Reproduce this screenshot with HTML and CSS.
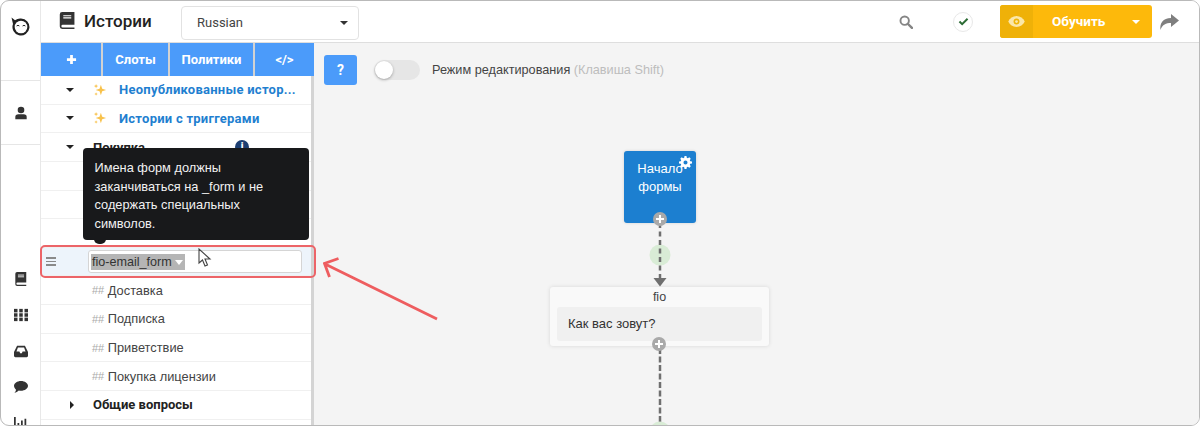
FILE: index.html
```html
<!DOCTYPE html>
<html lang="ru">
<head>
<meta charset="utf-8">
<title>Истории</title>
<link rel="stylesheet" href="styles.css">
</head>
<body>
<div class="frame">
  <nav class="rail">
    <div class="rail-top">
      <svg class="owl" viewBox="0 0 20 20"><path d="M.5 1.500l3.500 2.700A8.500 8.500 0 0 1 10 2.500a8.500 8.500 0 1 1-8 5.500z" fill="#222"/><circle cx="10" cy="11" r="6.300" fill="#fff"/><path d="M5.600 10q1.400-1.400 2.800 0M11.600 10q1.400-1.400 2.800 0" stroke="#222" fill="none" stroke-width="1"/></svg>
    </div>
    <div class="rail-user">
      <svg class="ri" viewBox="0 0 16 16"><circle cx="8" cy="4.600" r="3.800" fill="#333"/><path d="M1.500 15v-2.500Q1.500 9.500 5 9.500h6q3.500 0 3.500 3V15z" fill="#333"/></svg>
    </div>
    <div class="rail-icons">
      <svg class="ri" viewBox="0 0 14 16"><path d="M2.500 0H13v12H3a1.300 1.300 0 0 0 0 2.600h10V16H2.500A2 2 0 0 1 .5 14V2A2 2 0 0 1 2.500 0z" fill="#333"/><path d="M3.500 3.500h7M3.500 5.500h7" stroke="#fff"/></svg>
      <svg class="ri" viewBox="0 0 16 14"><g fill="#333"><rect x="0" y="0" width="4" height="4"/><rect x="6" y="0" width="4" height="4"/><rect x="12" y="0" width="4" height="4"/><rect x="0" y="5" width="4" height="4"/><rect x="6" y="5" width="4" height="4"/><rect x="12" y="5" width="4" height="4"/><rect x="0" y="10" width="4" height="4"/><rect x="6" y="10" width="4" height="4"/><rect x="12" y="10" width="4" height="4"/></g></svg>
      <svg class="ri" viewBox="0 0 16 14"><path d="M3.500 1h9L16 8v4.500a1.500 1.500 0 0 1-1.500 1.500h-13A1.500 1.500 0 0 1 0 12.500V8zM4.500 3L2.800 7.500h3.400L7 9.500h2l.8-2h3.400L11.500 3z" fill="#333" fill-rule="evenodd"/></svg>
      <svg class="ri" viewBox="0 0 16 14"><path d="M8 0c4.400 0 8 2.500 8 5.700s-3.600 5.700-8 5.700c-.9 0-1.700-.1-2.500-.3C4.200 12.500 2.300 13.500.5 13.500c1-1 1.700-2.200 1.800-3.500C.9 9 0 7.400 0 5.700 0 2.500 3.600 0 8 0z" fill="#333"/></svg>
      <svg class="ri" viewBox="0 0 16 14"><path d="M0 0h2v12h14v2H0zM4 7h2v4H4zM8 4h2v7H8zM12 2h2v9h-2z" fill="#333"/></svg>
    </div>
  </nav>
  <div class="main">
    <header class="topbar">
      <div class="title">
        <svg class="title-icon" viewBox="0 0 14 16"><path d="M2.500 0H14v12H3a1.300 1.300 0 0 0 0 2.600h11V16H2.500A2.300 2.300 0 0 1 .2 13.700V2.300A2.300 2.300 0 0 1 2.500 0z" fill="#333"/><path d="M3.500 3.500h7.500M3.500 5.500h7.500" stroke="#fff"/></svg>
        <span>Истории</span>
      </div>
      <div class="lang"><span>Russian</span><i class="caret"></i></div>
      <div class="top-right">
        <svg class="search" viewBox="0 0 16 16"><circle cx="6.500" cy="6.500" r="4.800" fill="none" stroke="#858585" stroke-width="2.200"/><path d="M10 10l4.800 4.800" stroke="#858585" stroke-width="2.800" stroke-linecap="round"/></svg>
        <div class="status"><svg viewBox="0 0 12 10"><path d="M1.500 5l3 3 6-6" fill="none" stroke="#2b6b34" stroke-width="2.200"/></svg></div>
        <div class="train">
          <div class="train-eye"><svg viewBox="0 0 18 12"><path d="M9 0c4 0 7.300 2.400 9 6-1.700 3.600-5 6-9 6S1.700 9.600 0 6c1.700-3.600 5-6 9-6z" fill="#fbe7a8"/><circle cx="9" cy="6" r="3.200" fill="#f0b505"/><circle cx="9" cy="6" r="1.500" fill="#fbe7a8"/></svg></div>
          <div class="train-label">Обучить</div>
          <div class="train-more"><i class="caret caret-light"></i></div>
        </div>
        <svg class="share" viewBox="0 0 20 16"><path d="M12 0l8 6.500-8 6.500V9C7 9 3.500 10.500 1.500 16 .5 9 4 4 12 4z" fill="#7f7f7f"/></svg>
      </div>
    </header>
    <div class="body">
      <aside class="sidebar">
        <div class="tools">
          <div class="tool tool-add"><svg viewBox="0 0 12 12"><path d="M6 1v10M1 6h10" stroke="#fff" stroke-width="3"/></svg></div>
          <div class="tool tool-slots">Слоты</div>
          <div class="tool tool-pol">Политики</div>
          <div class="tool tool-code">&lt;/&gt;</div>
        </div>
        <ul class="tree">
          <li class="row group blue"><i class="arrow"></i><svg class="spark" viewBox="0 0 16 16"><path d="M9 2l1.500 4.500L15 8l-4.500 1.500L9 14l-1.500-4.500L3 8l4.500-1.500z" fill="#f8c24c"/><path d="M3.500 1l.7 1.800L6 3.500l-1.800.7L3.500 6l-.7-1.800L1 3.500l1.800-.7zM3.500 10.500l.6 1.400 1.400.6-1.400.6-.6 1.400-.6-1.400-1.400-.6 1.400-.6z" fill="#f8c24c"/></svg><span class="clip">Неопубликованные истор...</span></li>
          <li class="row group blue"><i class="arrow"></i><svg class="spark" viewBox="0 0 16 16"><path d="M9 2l1.500 4.500L15 8l-4.500 1.500L9 14l-1.500-4.500L3 8l4.500-1.500z" fill="#f8c24c"/><path d="M3.500 1l.7 1.800L6 3.500l-1.800.7L3.500 6l-.7-1.800L1 3.500l1.800-.7zM3.500 10.500l.6 1.400 1.400.6-1.400.6-.6 1.400-.6-1.400-1.400-.6 1.400-.6z" fill="#f8c24c"/></svg><span>Истории с триггерами</span></li>
          <li class="row group dark"><i class="arrow"></i><span class="purchase">Покупка</span><b class="badge">i</b></li>
          <li class="row"></li>
          <li class="row"></li>
          <li class="row"></li>
          <li class="row editing">
            <span class="grip"><i></i><i></i><i></i></span>
            <div class="field"><span class="sel">fio-email_form<i class="caret caret-light caret-small"></i></span></div>
          </li>
          <li class="row story"><span class="hash">##</span> Доставка</li>
          <li class="row story"><span class="hash">##</span> Подписка</li>
          <li class="row story"><span class="hash">##</span> Приветствие</li>
          <li class="row story"><span class="hash">##</span> Покупка лицензии</li>
          <li class="row group dark closed"><i class="arrow arrow-right"></i><span>Общие вопросы</span></li>
          <li class="row"></li>
        </ul>
      </aside>
      <section class="canvas">
        <div class="canvas-head">
          <div class="help">?</div>
          <div class="switch"><i></i></div>
          <div class="mode">Режим редактирования <span>(Клавиша Shift)</span></div>
        </div>
        <svg class="links" viewBox="0 0 886 382">
          <circle cx="346" cy="212" r="10.500" fill="#d9ecd6"/>
          <path d="M346 180v56" stroke="#6f6f6f" stroke-width="2.500" stroke-dasharray="5 3.500" fill="none"/>
          <path d="M339.500 235h13l-6.500 8.500z" fill="#6f6f6f"/>
          <path d="M346 305v82" stroke="#6f6f6f" stroke-width="2.500" stroke-dasharray="6 2.500" fill="none"/>
          <circle cx="346" cy="389" r="10.500" fill="#d9ecd6"/>
        </svg>
        <div class="start-node">
          <span>Начало формы</span>
          <svg class="gear" viewBox="0 0 16 16"><path d="M6.800 0h2.400l.4 2.100 1.300.6L12.700 1.500l1.800 1.800-1.200 1.800.6 1.300 2.100.4v2.400l-2.100.4-.6 1.300 1.200 1.800-1.800 1.800-1.800-1.200-1.300.6-.4 2.100H6.800l-.4-2.100-1.300-.6-1.800 1.200-1.800-1.800 1.200-1.800-.6-1.300L0 9.200V6.800l2.100-.4.6-1.300-1.200-1.800 1.800-1.800 1.800 1.200 1.300-.6zM8 5.500a2.500 2.500 0 1 0 0 5 2.500 2.500 0 0 0 0-5z" fill="#fff" fill-rule="evenodd"/></svg>
          <i class="plus plus-start"></i>
        </div>
        <div class="form-node">
          <div class="form-name">fio</div>
          <div class="form-q">Как вас зовут?</div>
          <i class="plus plus-form"></i>
        </div>
      </section>
    </div>
  </div>
  <div class="tooltip">Имена форм должны заканчиваться на _form и не содержать специальных символов.</div>
  <div class="highlight"></div>
  <svg class="cursor" viewBox="0 0 14 20"><path d="M1 1v14l3.500-3 2.500 6 2.500-1-2.500-6h5z" fill="#fff" stroke="#444" stroke-width="1.100"/></svg>
  <svg class="callout" viewBox="0 0 120 66"><path d="M114 62L2 7M15.500 1.500L1.500 6.500l5 13.500" fill="none" stroke="#ee5d5f" stroke-width="2.800"/></svg>
</div>
</body>
</html>
```
FILE: styles.css
```css
* { box-sizing: border-box; }
html, body { margin: 0; height: 426px; overflow: hidden; background: #fff; }
body { font-family: "Liberation Sans", Arial, sans-serif; color: #333; }
ul { list-style: none; margin: 0; padding: 0; }
i { display: block; }

.frame {
  position: relative;
  display: flex;
  width: 1200px;
  height: 426px;
  border: 1.500px solid #b9b9b9;
  border-radius: 9px;
  overflow: hidden;
  background: #fff;
}

.rail {
  flex: 0 0 40px;
  display: flex;
  flex-direction: column;
  border-right: 1px solid #e8e8e8;
}
.rail-top { flex: none; height: 80px; padding-top: 15px; display: flex; justify-content: center; border-bottom: 1px solid #e6e6e6; }
.owl { width: 20px; height: 20px; }
.rail-user { flex: none; height: 64px; padding-top: 25px; display: flex; justify-content: center; border-bottom: 1px solid #e6e6e6; }
.ri { width: 14px; height: 14px; display: block; flex: none; }
.rail-icons { flex: none; margin-top: 127px; display: flex; flex-direction: column; align-items: center; gap: 22px; }

.main { flex: 1; min-width: 0; display: flex; flex-direction: column; }

.topbar {
  flex: 0 0 42px;
  display: flex;
  align-items: center;
  border-bottom: 1px solid #dedede;
  background: #fff;
}
.title { width: 140px; padding-left: 18px; padding-bottom: 2px; display: flex; align-items: center; gap: 9px; font: 500 17px Roboto, sans-serif; color: #222; }
.title-icon { width: 16px; height: 17px; }
.lang {
  width: 178px; height: 34px; margin-top: 2px;
  padding: 0 10px 0 15px;
  display: flex; align-items: center; justify-content: space-between;
  border: 1px solid #e2e2e2; border-radius: 4px;
  font: 13px Roboto, sans-serif; color: #444;
}
.caret { width: 0; height: 0; border: 4px solid transparent; border-top: 4px solid #333; border-bottom: 0; }
.caret-light { border-top-color: #fff; }
.caret-small { border-width: 5px 4px 0; display: inline-block; margin-left: 3px; vertical-align: 1px; }

.top-right { margin-left: auto; display: flex; align-items: center; padding-right: 20px; }
.search { width: 14px; height: 14px; margin-right: 40px; }
.status { width: 20px; height: 20px; margin-right: 27px; border: 1px solid #e8e8e8; border-radius: 50%; display: flex; align-items: center; justify-content: center; }
.status svg { width: 11px; height: 9px; }
.train { width: 152px; height: 33px; display: flex; border-radius: 3px; overflow: hidden; background: #fdb90b; color: #fff; font: 700 13.500px Roboto, sans-serif; }
.train-eye { flex: 0 0 33px; background: #efb108; display: flex; align-items: center; justify-content: center; }
.train-eye svg { width: 17px; height: 11px; }
.train-label { flex: 1; padding-left: 19px; line-height: 33px; }
.train-more { flex: 0 0 33px; display: flex; align-items: center; justify-content: center; }
.share { width: 20px; height: 16px; margin-left: 7px; }

.body { flex: 1; min-height: 0; display: flex; }

.sidebar { flex: 0 0 273px; border-right: 3px solid #d4d4d4; }
.tools { height: 33px; display: flex; gap: 2px; background: #d2d2d2; margin-right: -3px; }
.tool { display: flex; align-items: center; justify-content: center; background: #4b9bfa; color: #fff; font: 700 13px Roboto, sans-serif; }
.tool-add { width: 60px; }
.tool-add svg { width: 11px; height: 11px; }
.tool-slots { width: 65px; }
.tool-pol { width: 83px; }
.tool-code { flex: 1; }

.row { height: 28.650px; border-bottom: 1px solid #f0f0f0; display: flex; align-items: center; font-size: 12.800px; color: #444; }
.group { padding-left: 25px; font: 700 13px Roboto, sans-serif; }
.blue { color: #1f7fd0; letter-spacing: .25px; }
.dark { color: #222; }
.clip { white-space: nowrap; }
.arrow { width: 0; height: 0; border: 4px solid transparent; border-top: 4px solid #222; border-bottom: 0; margin-right: 19px; }
.arrow-right { border: 4px solid transparent; border-left: 4px solid #222; border-right: 0; margin: 0 19px 0 2px; }
.spark { width: 14px; height: 14px; margin-right: 12px; }
.purchase { width: 142px; }
.badge { width: 14px; height: 14px; border-radius: 50%; background: #1d3f72; color: #fff; font-size: 10px; text-align: center; line-height: 14px; }
.closed { padding-left: 27px; }

.story { padding-left: 51px; white-space: pre; }
.hash { color: #aaa; font-size: 11px; }

.editing { background: #edf4fb; padding-left: 5px; }
.grip { width: 10px; display: flex; flex-direction: column; gap: 2px; margin-right: 32px; }
.grip i { height: 1.500px; background: #8a8a8a; }
.field { width: 214px; height: 23px; padding: 2px; background: #fff; border: 1px solid #d5d5d5; border-radius: 3px; display: flex; align-items: center; }
.sel { background: #b5b5b5; color: #333; font-size: 12.600px; line-height: 17px; height: 16px; padding: 0 2px 0 1px; white-space: nowrap; }

.canvas { position: relative; flex: 1; min-width: 0; background: #f4f4f4; }
.canvas-head { display: flex; align-items: center; padding: 12px 0 0 10px; }
.help { width: 33px; height: 30px; background: #4b9bfa; border-radius: 3px; color: #fff; font: 700 14px Roboto, sans-serif; text-align: center; line-height: 30px; margin-right: 17px; }
.switch { width: 46px; height: 20px; background: #e6e6e6; border-radius: 10px; margin-right: 12px; }
.switch i { width: 18px; height: 18px; margin: 1px 0 0 1px; background: #fff; border-radius: 50%; box-shadow: 0 1px 3px rgba(0,0,0,.3); }
.mode { font-size: 12.700px; color: #444; }
.mode span { color: #bdbdbd; }

.links { position: absolute; left: 0; top: 0; width: 886px; height: 382px; }
.start-node {
  position: absolute; left: 310px; top: 108px; width: 72px; height: 72px;
  padding: 9px 8px 0;
  background: #1c7fd0; border-radius: 3px; color: #fff; font-size: 13px; line-height: 18px; text-align: center;
  box-shadow: 0 0 3px rgba(0,0,0,.15);
}
.gear { position: absolute; right: 4px; top: 5px; width: 13px; height: 13px; }
.plus { position: absolute; width: 14px; height: 14px; border-radius: 50%; background: #a9a9a9; }
.plus::before, .plus::after { content: ""; position: absolute; background: #fff; }
.plus::before { left: 3px; top: 6px; width: 8px; height: 2px; }
.plus::after { left: 6px; top: 3px; width: 2px; height: 8px; }
.plus-start { left: 29px; bottom: -3px; }
.form-node {
  position: absolute; left: 236px; top: 244px; width: 219px; height: 59px;
  padding: 0 7px;
  background: #f9f9f9; border-radius: 3px; box-shadow: 0 0 4px rgba(0,0,0,.12);
}
.form-name { height: 20px; font-size: 12.500px; line-height: 20px; text-align: center; color: #444; }
.form-q { height: 34px; padding-left: 11px; background: #f0f0f0; border-radius: 3px; font-size: 13px; line-height: 33px; color: #333; }
.plus-form { left: 102px; bottom: -5px; }

.tooltip {
  position: absolute; left: 81.500px; top: 147px; width: 226px; height: 92px;
  padding: 11px 12px;
  background: #18191b; border-radius: 4px; color: #f2f2f2; font-size: 12.800px; line-height: 18.500px;
}
.tooltip::after { content: ""; position: absolute; left: 11px; bottom: -4px; width: 12px; height: 5px; background: #18191b; border-radius: 0 0 6px 6px; }
.highlight { position: absolute; left: 38.500px; top: 243.500px; width: 276px; height: 33px; border: 2.500px solid #ec6468; border-radius: 5px; }
.cursor { position: absolute; left: 197px; top: 247px; width: 14px; height: 20px; }
.callout { position: absolute; left: 322px; top: 256px; width: 120px; height: 66px; }
```
